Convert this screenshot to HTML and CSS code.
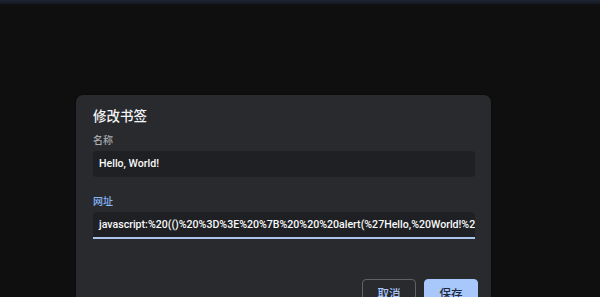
FILE: index.html
```html
<!DOCTYPE html>
<html lang="zh-CN">
<head>
<meta charset="utf-8">
<link rel="stylesheet" href="styles.css">
</head>
<body>
<div class="topbar"></div>
<main class="stage">
  <section class="dialog">
    <h1 class="title">修改书签</h1>
    <label class="label">名称</label>
    <div class="field">Hello, World!</div>
    <label class="label label-active">网址</label>
    <div class="field field-active">javascript:%20(()%20%3D%3E%20%7B%20%20%20alert(%27Hello,%20World!%27)%3B%20%7D)()%3B</div>
    <div class="actions">
      <button class="btn btn-outline">取消</button>
      <button class="btn btn-primary">保存</button>
    </div>
  </section>
</main>
</body>
</html>
```
FILE: styles.css
```css
html, body {
  margin: 0;
  padding: 0;
  height: 100%;
  overflow: hidden;
}
body {
  background: #0f0f10;
  font-family: Roboto, "Noto Sans CJK SC", sans-serif;
  color: #e8eaed;
}
.topbar {
  height: 4px;
  background: linear-gradient(#1d2633, #141922);
}
.stage {
  padding: 91px 0 0 76px;
}
.dialog {
  width: 415px;
  box-sizing: border-box;
  background: #292a2e;
  border-radius: 7px;
  padding: 11px 16px 0 17px;
  height: 260px;
  box-shadow: 0 0 2px rgba(0,0,0,0.6);
}
.title {
  margin: 0 0 7px 0;
  font-size: 13.5px;
  line-height: 20px;
  font-weight: 500;
  color: #f1f3f4;
}
.label {
  display: block;
  font-size: 10px;
  line-height: 16px;
  color: #a8abb0;
  margin-bottom: 2px;
  font-weight: 500;
}
.label-active {
  color: #8ab4f8;
  margin-top: 17px;
}
.field {
  height: 26px;
  line-height: 26px;
  box-sizing: border-box;
  background: #1f2023;
  border-radius: 4px;
  padding: 0 6px;
  font-size: 10.6px;
  font-weight: 500;
  color: #f8f9fa;
  white-space: nowrap;
  overflow: hidden;
}
.field-active {
  height: 27px;
  border-radius: 4px 4px 0 0;
  border-bottom: 2px solid #aac4ee;
  line-height: 25px;
}
.actions {
  display: flex;
  justify-content: flex-end;
  gap: 8px;
  margin-top: 40px;
  margin-right: -3px;
}
.btn {
  width: 54px;
  height: 28px;
  border-radius: 4px;
  font-family: Roboto, "Noto Sans CJK SC", sans-serif;
  font-size: 11.5px;
  font-weight: 500;
  padding: 0;
}
.btn-outline {
  background: transparent;
  border: 1px solid #5f6368;
  color: #a8c7fa;
}
.btn-primary {
  background: #a8c7fa;
  border: 1px solid #a8c7fa;
  color: #1f2a3c;
}
```
